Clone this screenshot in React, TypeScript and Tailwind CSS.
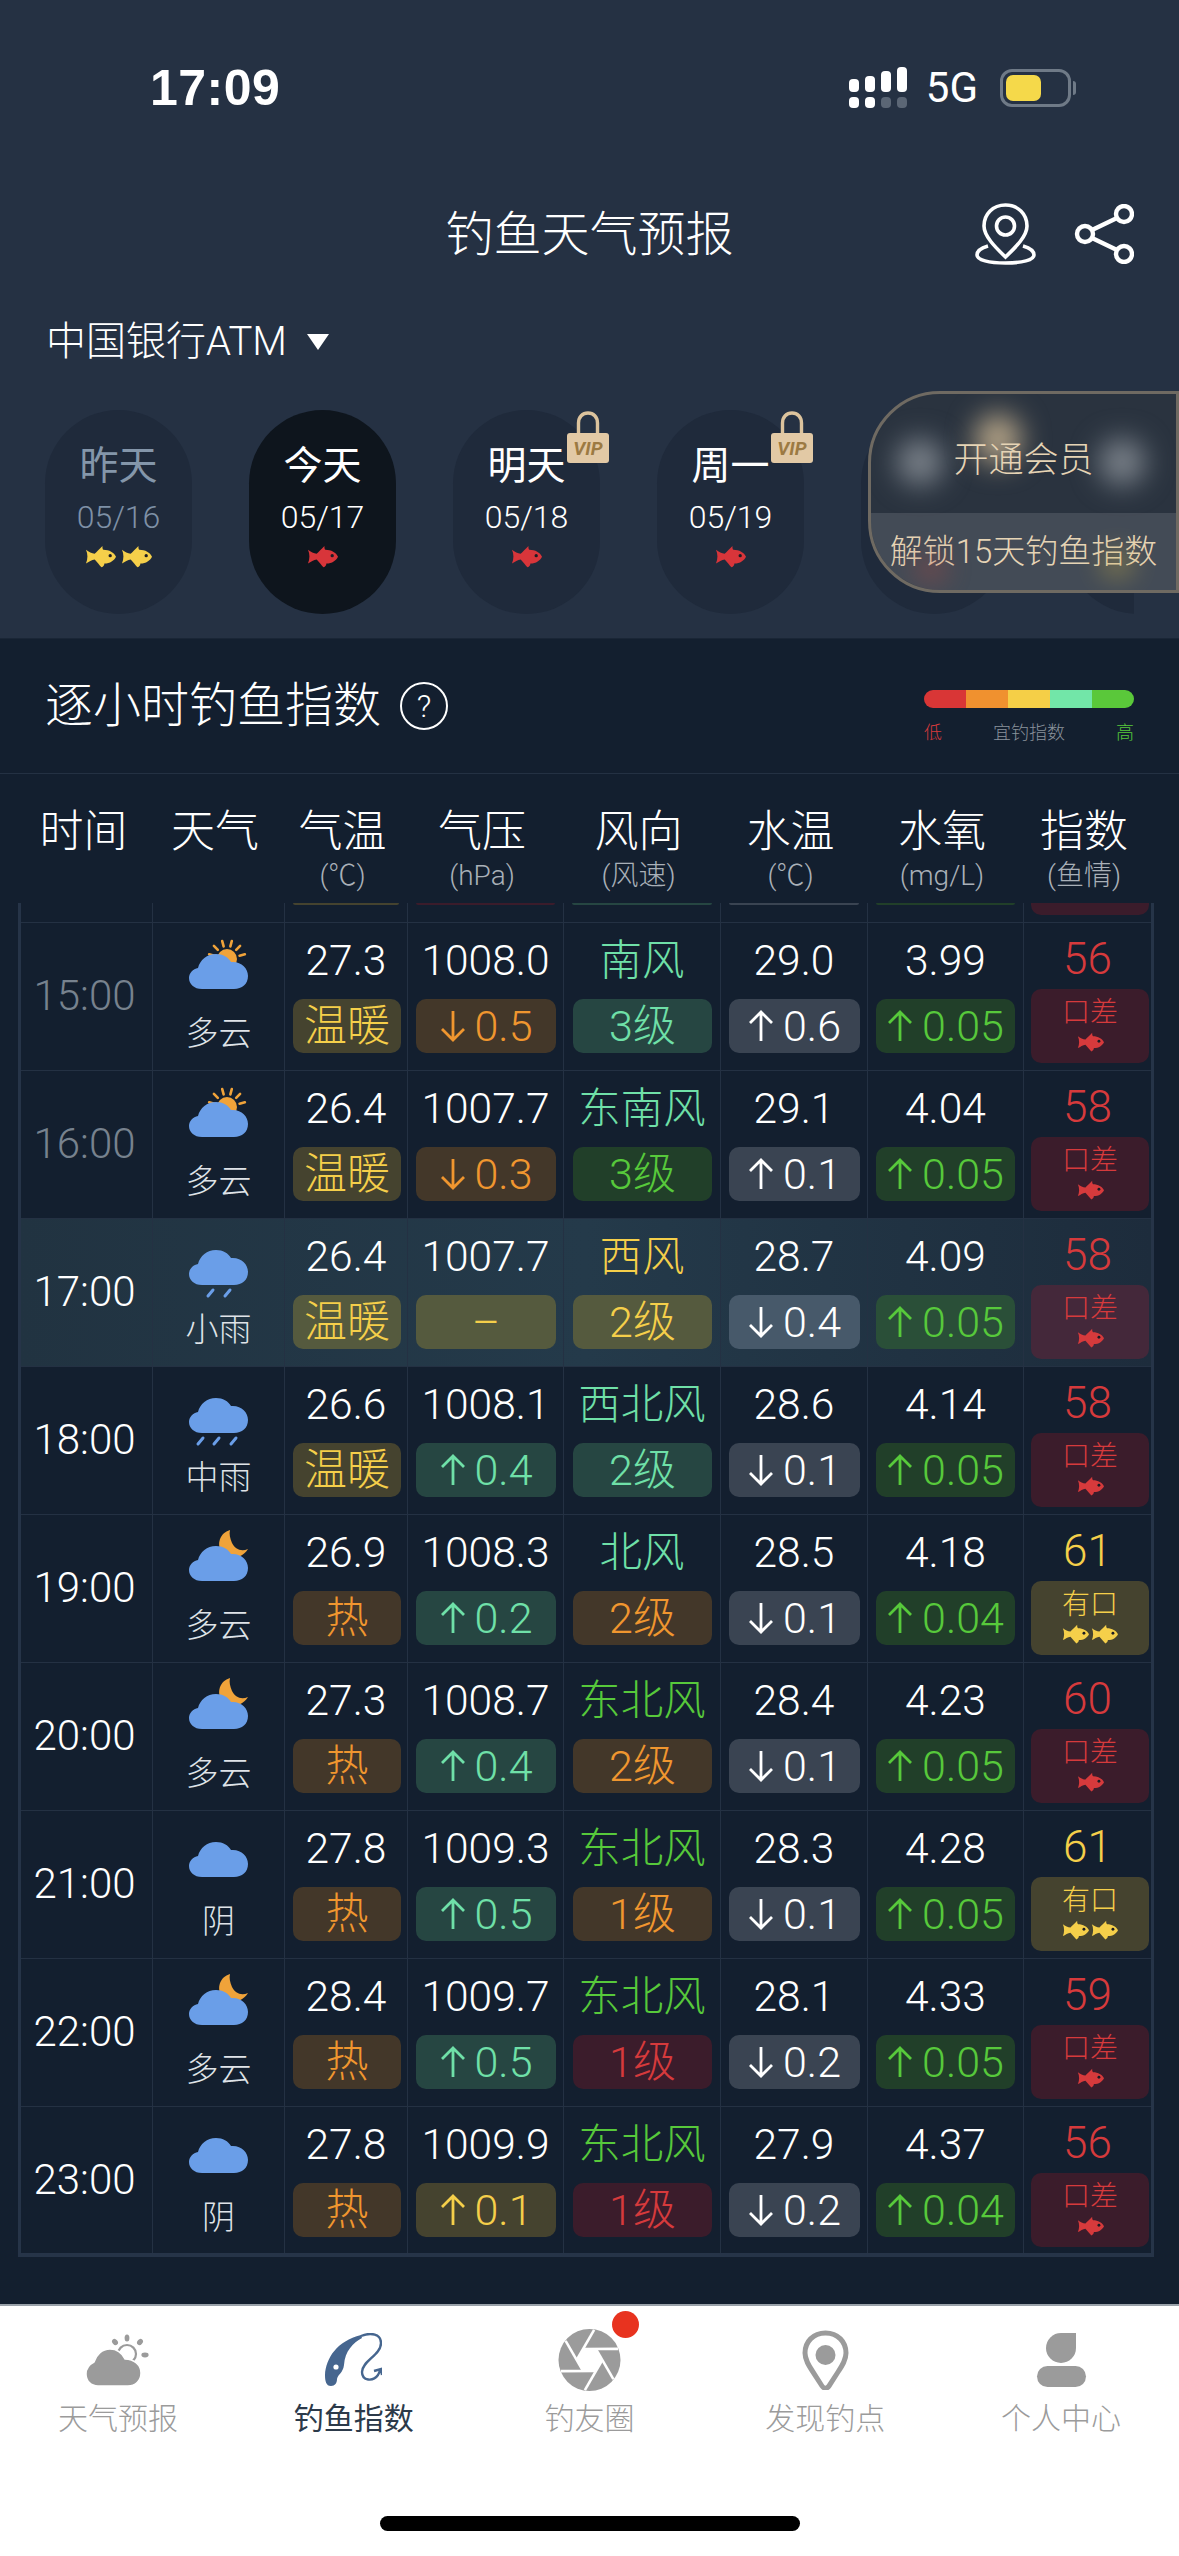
import React from 'react';

type Tone = 'yellow' | 'orange' | 'teal' | 'green' | 'gray' | 'red';
type Sky = 'sun' | 'moon' | 'cloud' | 'lightRain' | 'midRain';

interface Reading {
  text: string;
  tone: Tone;
  arrow?: 'up' | 'down';
}

interface Hour {
  time: string;
  past?: boolean;
  now?: boolean;
  sky: Sky;
  skyText: string;
  temp: string;
  tempTag: Reading;
  pressure: string;
  pressureTag: Reading;
  wind: string;
  windTone: Tone;
  windTag: Reading;
  water: string;
  waterTag: Reading;
  oxygen: string;
  oxygenTag: Reading;
  index: string;
  indexTone: 'red' | 'yellow';
}

const warm: Reading = { text: '温暖', tone: 'yellow' };
const hot: Reading = { text: '热', tone: 'orange' };

const hours: Hour[] = [
  { time: '15:00', past: true, sky: 'sun', skyText: '多云', temp: '27.3', tempTag: warm, pressure: '1008.0', pressureTag: { text: '0.5', tone: 'orange', arrow: 'down' }, wind: '南风', windTone: 'teal', windTag: { text: '3级', tone: 'teal' }, water: '29.0', waterTag: { text: '0.6', tone: 'gray', arrow: 'up' }, oxygen: '3.99', oxygenTag: { text: '0.05', tone: 'green', arrow: 'up' }, index: '56', indexTone: 'red' },
  { time: '16:00', past: true, sky: 'sun', skyText: '多云', temp: '26.4', tempTag: warm, pressure: '1007.7', pressureTag: { text: '0.3', tone: 'orange', arrow: 'down' }, wind: '东南风', windTone: 'teal', windTag: { text: '3级', tone: 'green' }, water: '29.1', waterTag: { text: '0.1', tone: 'gray', arrow: 'up' }, oxygen: '4.04', oxygenTag: { text: '0.05', tone: 'green', arrow: 'up' }, index: '58', indexTone: 'red' },
  { time: '17:00', now: true, sky: 'lightRain', skyText: '小雨', temp: '26.4', tempTag: warm, pressure: '1007.7', pressureTag: { text: '–', tone: 'yellow' }, wind: '西风', windTone: 'yellow', windTag: { text: '2级', tone: 'yellow' }, water: '28.7', waterTag: { text: '0.4', tone: 'gray', arrow: 'down' }, oxygen: '4.09', oxygenTag: { text: '0.05', tone: 'green', arrow: 'up' }, index: '58', indexTone: 'red' },
  { time: '18:00', sky: 'midRain', skyText: '中雨', temp: '26.6', tempTag: warm, pressure: '1008.1', pressureTag: { text: '0.4', tone: 'teal', arrow: 'up' }, wind: '西北风', windTone: 'teal', windTag: { text: '2级', tone: 'teal' }, water: '28.6', waterTag: { text: '0.1', tone: 'gray', arrow: 'down' }, oxygen: '4.14', oxygenTag: { text: '0.05', tone: 'green', arrow: 'up' }, index: '58', indexTone: 'red' },
  { time: '19:00', sky: 'moon', skyText: '多云', temp: '26.9', tempTag: hot, pressure: '1008.3', pressureTag: { text: '0.2', tone: 'teal', arrow: 'up' }, wind: '北风', windTone: 'teal', windTag: { text: '2级', tone: 'orange' }, water: '28.5', waterTag: { text: '0.1', tone: 'gray', arrow: 'down' }, oxygen: '4.18', oxygenTag: { text: '0.04', tone: 'green', arrow: 'up' }, index: '61', indexTone: 'yellow' },
  { time: '20:00', sky: 'moon', skyText: '多云', temp: '27.3', tempTag: hot, pressure: '1008.7', pressureTag: { text: '0.4', tone: 'teal', arrow: 'up' }, wind: '东北风', windTone: 'green', windTag: { text: '2级', tone: 'orange' }, water: '28.4', waterTag: { text: '0.1', tone: 'gray', arrow: 'down' }, oxygen: '4.23', oxygenTag: { text: '0.05', tone: 'green', arrow: 'up' }, index: '60', indexTone: 'red' },
  { time: '21:00', sky: 'cloud', skyText: '阴', temp: '27.8', tempTag: hot, pressure: '1009.3', pressureTag: { text: '0.5', tone: 'teal', arrow: 'up' }, wind: '东北风', windTone: 'green', windTag: { text: '1级', tone: 'orange' }, water: '28.3', waterTag: { text: '0.1', tone: 'gray', arrow: 'down' }, oxygen: '4.28', oxygenTag: { text: '0.05', tone: 'green', arrow: 'up' }, index: '61', indexTone: 'yellow' },
  { time: '22:00', sky: 'moon', skyText: '多云', temp: '28.4', tempTag: hot, pressure: '1009.7', pressureTag: { text: '0.5', tone: 'teal', arrow: 'up' }, wind: '东北风', windTone: 'green', windTag: { text: '1级', tone: 'red' }, water: '28.1', waterTag: { text: '0.2', tone: 'gray', arrow: 'down' }, oxygen: '4.33', oxygenTag: { text: '0.05', tone: 'green', arrow: 'up' }, index: '59', indexTone: 'red' },
  { time: '23:00', sky: 'cloud', skyText: '阴', temp: '27.8', tempTag: hot, pressure: '1009.9', pressureTag: { text: '0.1', tone: 'yellow', arrow: 'up' }, wind: '东北风', windTone: 'green', windTag: { text: '1级', tone: 'red' }, water: '27.9', waterTag: { text: '0.2', tone: 'gray', arrow: 'down' }, oxygen: '4.37', oxygenTag: { text: '0.04', tone: 'green', arrow: 'up' }, index: '56', indexTone: 'red' },
];

const textTone: Record<Tone, string> = {
  yellow: 'text-[#f5cf4a]',
  orange: 'text-[#f0962f]',
  teal: 'text-[#6fe0a8]',
  green: 'text-[#57c93b]',
  gray: 'text-white',
  red: 'text-[#d63a3c]',
};

const chipTone: Record<Tone, string> = {
  yellow: 'bg-[#45432f]',
  orange: 'bg-[#433729]',
  teal: 'bg-[#264642]',
  green: 'bg-[#213f29]',
  gray: 'bg-[#3a4452]',
  red: 'bg-[#3b1c2b]',
};

const chipToneNow: Record<Tone, string> = {
  yellow: 'bg-[#555a3e]',
  orange: 'bg-[#433729]',
  teal: 'bg-[#264642]',
  green: 'bg-[#2a4f38]',
  gray: 'bg-[#47596a]',
  red: 'bg-[#44283a]',
};

const columns = 'grid grid-cols-[131px_132px_123px_156px_157px_147px_156px_128px]';
const CLOUD = 'M13 51C5 51 0 46 0 40C0 35 4 31 9 30C11 22 18 16 27 16C34 16 39 19 42 24C52 23 59 30 59 38C59 46 53 51 45 51Z';
const FISH = 'M1 5C4 7 7 9 10 9C12 7 15 4 18 1C18 3 18 4 19 5C25 5 30 8 32 12C30 16 26 19 20 19C20 21 19 22 17 23C15 21 13 18 10 15C7 15 4 18 1 19C3 15 3 9 1 5Z';

function Fish({ color, size = 31, eye = '#1c1c24' }: { color: string; size?: number; eye?: string }) {
  return (
    <svg width={size} height={(size * 24) / 32} viewBox="0 0 32 24">
      <path d={FISH} fill={color} />
      <circle cx="26" cy="11" r="1.7" fill={eye} />
    </svg>
  );
}

function Arrow({ dir }: { dir: 'up' | 'down' }) {
  return (
    <svg width="26" height="34" viewBox="0 0 26 34" fill="none" stroke="currentColor" strokeWidth="2.8" className="mr-[9px]">
      {dir === 'up' ? <path d="M13 3V32M2 14L13 3L24 14" /> : <path d="M13 31V2M2 20L13 31L24 20" />}
    </svg>
  );
}

function SkyIcon({ sky }: { sky: Sky }) {
  const rays = [-75, -45, -15, 15, 45, 75];
  return (
    <svg width="59" height="63" viewBox="0 0 59 63" className="overflow-visible">
      {sky === 'sun' && (
        <g fill="#f0a33a" stroke="#f0a33a">
          <circle cx="38" cy="21" r="10" stroke="none" />
          {rays.map((r) => (
            <line key={r} x1="38" y1="8" x2="38" y2="2.5" strokeWidth="2.6" strokeLinecap="round" transform={`rotate(${r} 38 21)`} />
          ))}
        </g>
      )}
      {sky === 'moon' && <path d="M41 0C31 3 27 14 33 23C38 30 52 30 59 19C52 22 46 19 43 13C41 8 40 4 41 0Z" fill="#f0a33a" />}
      <path d={CLOUD} fill="#6a9ee8" />
      {sky === 'lightRain' && (
        <g stroke="#6a9ee8" strokeWidth="3" strokeLinecap="round">
          <line x1="24" y1="56" x2="19" y2="62" />
          <line x1="41" y1="56" x2="36" y2="62" />
        </g>
      )}
      {sky === 'midRain' && (
        <g stroke="#6a9ee8" strokeWidth="3" strokeLinecap="round">
          <line x1="14" y1="56" x2="9" y2="62" />
          <line x1="30" y1="56" x2="25" y2="62" />
          <line x1="47" y1="56" x2="42" y2="62" />
        </g>
      )}
    </svg>
  );
}

function Tag({ reading, now, className }: { reading: Reading; now?: boolean; className: string }) {
  const bg = now ? chipToneNow[reading.tone] : chipTone[reading.tone];
  return (
    <div className={`h-[54px] rounded-[10px] flex items-center justify-center text-[43px] font-light ${bg} ${textTone[reading.tone]} ${className}`}>
      {reading.arrow && <Arrow dir={reading.arrow} />}
      <span>{reading.text}</span>
    </div>
  );
}

function DataCell({ value, valueClass, tag, now, tagClass }: { value: string; valueClass?: string; tag: Reading; now?: boolean; tagClass: string }) {
  return (
    <div className="border-l border-[#243143] flex flex-col">
      <div className={`h-[76px] flex items-center justify-center text-[42.5px] font-light leading-none ${valueClass ?? 'text-white'}`}>{value}</div>
      <Tag reading={tag} now={now} className={tagClass} />
    </div>
  );
}

function HourRow({ hour }: { hour: Hour }) {
  const red = hour.indexTone === 'red';
  const indexBg = red ? (hour.now ? 'bg-[#44283a]' : 'bg-[#3b1c2b]') : 'bg-[#45432f]';
  const fishColor = red ? '#d63a3c' : '#f5cf4a';
  return (
    <div
      className={`${columns} h-[148px] border-b border-[#243143] last:h-[146px] last:border-b-0 ${
        hour.now ? 'bg-gradient-to-r from-[#213341] via-[#243a4a] to-[#1d2c3c]' : ''
      }`}
    >
      <div className={`flex items-center justify-center pr-[4px] pb-[2px] text-[42px] font-light ${hour.past ? 'text-[#77828e]' : 'text-white'}`}>{hour.time}</div>
      <div className="border-l border-[#243143] flex flex-col items-center pt-[15px]">
        <SkyIcon sky={hour.sky} />
        <div className="mt-[15px] text-[33px] leading-[36px] font-light text-[#dfe3e8]">{hour.skyText}</div>
      </div>
      <DataCell value={hour.temp} tag={hour.tempTag} now={hour.now} tagClass="ml-[8px] mr-[6px]" />
      <DataCell value={hour.pressure} tag={hour.pressureTag} now={hour.now} tagClass="ml-[8px] mr-[7px]" />
      <DataCell value={hour.wind} valueClass={textTone[hour.windTone]} tag={hour.windTag} now={hour.now} tagClass="ml-[9px] mr-[8px]" />
      <DataCell value={hour.water} tag={hour.waterTag} now={hour.now} tagClass="ml-[8px] mr-[7px]" />
      <DataCell value={hour.oxygen} tag={hour.oxygenTag} now={hour.now} tagClass="ml-[8px] mr-[8px]" />
      <div className="border-l border-[#243143] flex flex-col">
        <div className={`h-[66px] pt-[6px] flex items-center justify-center text-[44px] font-light ${red ? 'text-[#d63a3c]' : 'text-[#f5cf4a]'}`}>{hour.index}</div>
        <div className={`ml-[7px] mr-[2px] h-[74px] rounded-[10px] flex flex-col items-center ${indexBg}`}>
          <div className={`h-[42px] pt-[6px] text-[28px] leading-[36px] font-light ${red ? 'text-[#d63a3c]' : 'text-[#f5cf4a]'}`}>{red ? '口差' : '有口'}</div>
          <div className="flex gap-[2px] mt-[1px]">
            <Fish color={fishColor} size={27} />
            {!red && <Fish color={fishColor} size={27} />}
          </div>
        </div>
      </div>
    </div>
  );
}

function DayPill({ name, date, past, active, vip, fish }: { name: string; date: string; past?: boolean; active?: boolean; vip?: boolean; fish: 'red' | 'yellow' }) {
  return (
    <div className={`relative shrink-0 w-[147px] h-[204px] rounded-[74px] flex flex-col items-center pt-[32px] ${active ? 'bg-[#0e151d]' : 'bg-[#1f2a3b]'}`}>
      <div className={`h-[48px] leading-[48px] text-[39px] ${past ? 'text-[#8496aa]' : 'text-white'}`}>{name}</div>
      <div className={`mt-[7px] h-[40px] leading-[40px] text-[32px] font-light ${past ? 'text-[#7e90a6]' : 'text-white'}`}>{date}</div>
      <div className="mt-[8px] flex gap-[5px]">
        {fish === 'yellow' ? (
          <>
            <Fish color="#f5cf4a" />
            <Fish color="#f5cf4a" />
          </>
        ) : (
          <Fish color="#d8353a" />
        )}
      </div>
      {vip && (
        <div className="absolute left-[114px] top-[1px] w-[42px] flex flex-col items-center">
          <svg width="24" height="22" viewBox="0 0 24 22" fill="none" stroke="#dcc39d" strokeWidth="3.4">
            <path d="M2.5 22V12C2.5 6 6.5 2 12 2C17.5 2 21.5 6 21.5 12V22" />
          </svg>
          <div className="w-[42px] h-[30px] rounded-[3px] bg-[#e2c9a5] flex items-center justify-center text-[#9c7a42] text-[19px] leading-none font-bold italic">VIP</div>
        </div>
      )}
    </div>
  );
}

function TabCloud() {
  return (
    <svg width="64" height="52" viewBox="0 0 64 52">
      <g fill="#9b9b9b">
        <ellipse cx="29" cy="8" rx="2.6" ry="3.4" transform="rotate(-40 29 8)" />
        <ellipse cx="41" cy="4" rx="2.4" ry="3.6" />
        <ellipse cx="54" cy="8" rx="2.6" ry="3.4" transform="rotate(40 54 8)" />
        <ellipse cx="59" cy="21" rx="3.6" ry="2.4" />
      </g>
      <circle cx="41" cy="20" r="9" fill="none" stroke="#9b9b9b" strokeWidth="2.2" />
      <path d="M12 52C5 52 0 47 0 40C0 34 4 30 8 28C10 21 16 15 24 15C31 15 36 19 39 25C48 25 55 31 55 39C55 47 49 52 42 52Z" fill="#9b9b9b" stroke="#fff" strokeWidth="1.5" />
    </svg>
  );
}

function TabRod() {
  return (
    <svg width="57" height="54" viewBox="0 0 57 54" fill="none">
      <path d="M6 53C1 53 0 48 0 42C1 25 12 8 36 2L37 5C28 10 20 18 19 32C18 40 13 41 12 46C12 50 10 53 6 53Z" fill="#46668f" />
      <circle cx="11" cy="34" r="2.6" fill="#fff" />
      <path d="M36 3C46 -1 56 1 56 10C56 22 37 28 37 39C37 48 48 49 53 42L56 36M49 38L56 36L57 42" stroke="#46668f" strokeWidth="2.4" />
    </svg>
  );
}

function TabAperture() {
  return (
    <svg width="63" height="64" viewBox="0 0 64 64">
      <circle cx="32" cy="32" r="31.5" fill="#9b9b9b" />
      {[0, 60, 120, 180, 240, 300].map((r) => (
        <line key={r} x1="45" y1="32" x2="27.3" y2="62.7" stroke="#fff" strokeWidth="2.6" transform={`rotate(${r} 32 32)`} />
      ))}
      <polygon points="45,32 38.5,43.3 25.5,43.3 19,32 25.5,20.7 38.5,20.7" fill="#fff" />
    </svg>
  );
}

function TabPin() {
  return (
    <svg width="47" height="60" viewBox="0 0 47 60">
      <path d="M23.5 3C11 3 3 12 3 23C3 30 7 36 11 42L20 56C22 59 25 59 27 56L36 42C40 36 44 30 44 23C44 12 36 3 23.5 3Z" fill="none" stroke="#9b9b9b" strokeWidth="5" />
      <circle cx="23.5" cy="25" r="10" fill="#9b9b9b" />
    </svg>
  );
}

function TabPerson() {
  return (
    <div className="flex flex-col items-center">
      <div className="w-[30px] h-[30px] rounded-full rounded-tr-none bg-[#9b9b9b]" />
      <div className="mt-[3px] w-[49px] h-[21px] rounded-full bg-[#9b9b9b]" />
    </div>
  );
}

export default function App() {
  return (
    <div className="w-[1179px] h-[2556px] flex flex-col overflow-hidden bg-[#131f2f] [font-family:Roboto,'Noto_Sans_CJK_SC',sans-serif]">
      {/* top part */}
      <div className="h-[638px] bg-[#253143] text-white shrink-0">
        <div className="h-[188px] flex items-start pt-[60px] pl-[150px] pr-[108px] justify-between">
          <div className="text-[50px] leading-[56px] font-bold tracking-[0.5px] [font-family:'Liberation_Sans',sans-serif]">17:09</div>
          <div className="flex items-center mt-[7px]">
            <svg width="58" height="42" viewBox="0 0 58 42" fill="#fff">
              <rect x="0" y="12" width="10" height="13" rx="4" />
              <rect x="16" y="9" width="10" height="16" rx="4" />
              <rect x="32" y="4" width="10" height="21" rx="4" />
              <rect x="48" y="0" width="10" height="25" rx="4" />
              <rect x="0" y="30" width="10" height="11" rx="4" />
              <rect x="16" y="30" width="10" height="11" rx="4" />
              <rect x="32" y="30" width="10" height="11" rx="4" fill="#5b6675" />
              <rect x="48" y="30" width="10" height="11" rx="4" fill="#5b6675" />
            </svg>
            <div className="ml-[19px] text-[42px] leading-none">5G</div>
            <div className="relative ml-[22px] w-[71px] h-[38px] rounded-[12px] border-[3px] border-[#6f7a87]">
              <div className="absolute left-[3px] top-[3px] bottom-[3px] w-[35px] rounded-[7px] bg-[#f5d94a]" />
              <div className="absolute -right-[8px] top-[9px] w-[3px] h-[14px] rounded-r-full bg-[#6f7a87]" />
            </div>
          </div>
        </div>
        <div className="relative h-[94px] flex items-center justify-center text-[48px] font-light">
          钓鱼天气预报
          <div className="absolute right-[45px] top-[15px] flex items-center gap-[38px]">
            <svg width="61" height="62" viewBox="0 0 61 62" fill="none" stroke="#fff" strokeWidth="3.6">
              <path d="M30.5 2C18 2 9 11 9 23C9 33 20 44 30.5 54C41 44 52 33 52 23C52 11 43 2 30.5 2Z" />
              <circle cx="30.5" cy="23" r="9" />
              <path d="M13 43C6 45 2 48 2 52C2 57 14 60 30.5 60C47 60 59 57 59 52C59 48 55 45 48 43" />
            </svg>
            <svg width="60" height="60" viewBox="0 0 60 60" fill="none" stroke="#fff" strokeWidth="4.4">
              <circle cx="50" cy="10" r="8" />
              <circle cx="11" cy="30" r="8" />
              <circle cx="50" cy="50" r="8" />
              <path d="M18 26L43 14M18 34L43 46" />
            </svg>
          </div>
        </div>
        <div className="mt-[36px] pl-[46px] h-[48px] flex items-center text-[40px] font-light">
          中国银行ATM
          <svg width="24" height="18" viewBox="0 0 24 18" className="ml-[19px]" fill="#fff">
            <path d="M1 1H23L12 17Z" />
          </svg>
        </div>
        <div className="relative mt-[44px]">
          <div className="w-[1134px] overflow-hidden flex gap-[57px] pl-[45px]">
            <DayPill name="昨天" date="05/16" past fish="yellow" />
            <DayPill name="今天" date="05/17" active fish="red" />
            <DayPill name="明天" date="05/18" vip fish="red" />
            <DayPill name="周一" date="05/19" vip fish="red" />
            <div className="shrink-0 w-[147px] h-[204px] rounded-[74px] bg-[#1f2a3b]" />
            <div className="shrink-0 w-[147px] h-[204px] rounded-[74px] bg-[#1f2a3b]" />
          </div>
          {/* member card, blurred over the locked days */}
          <div className="absolute left-[868px] -top-[19px] w-[311px] h-[202px] rounded-l-[72px] border-[3px] border-[#6f6a62] bg-[#2a333f] overflow-hidden flex flex-col text-[#e6d4b5]">
            <div className="absolute left-[26px] top-[45px] w-[46px] h-[46px] rounded-full bg-[#7d848c] blur-[14px]" />
            <div className="absolute left-[104px] top-[20px] w-[46px] h-[50px] rounded-full bg-[#b5a487] blur-[14px]" />
            <div className="absolute left-[228px] top-[45px] w-[46px] h-[46px] rounded-full bg-[#7d848c] blur-[14px]" />
            <div className="relative h-[119px] flex items-center justify-center pt-[16px] text-[35px] font-light">开通会员</div>
            <div className="relative flex-1 bg-[#ffffff1f] flex items-center justify-center text-[33px] font-light leading-none">解锁15天钓鱼指数</div>
            <div className="absolute left-[42px] top-[160px] w-[36px] h-[30px] rounded-full bg-[#a04a45] opacity-40 blur-[12px]" />
            <div className="absolute left-[228px] top-[155px] w-[36px] h-[30px] rounded-full bg-[#c0a94a] opacity-40 blur-[12px]" />
          </div>
        </div>
      </div>

      {/* hourly index */}
      <div className="flex-1 min-h-0 border-t border-[#1a2636]">
        <div className="h-[135px] flex justify-between items-start border-b border-[#243143] pl-[45px] pr-[45px]">
          <div className="h-[134px] flex items-center text-white text-[48px] font-light">
            逐小时钓鱼指数
            <div className="ml-[19px] w-[48px] h-[48px] rounded-full border-2 border-white flex items-center justify-center text-[32px] leading-none">?</div>
          </div>
          <div className="mt-[51px] w-[210px]">
            <div className="h-[18px] rounded-full overflow-hidden flex">
              <div className="flex-1 bg-[#d93636]" />
              <div className="flex-1 bg-[#f0912f]" />
              <div className="flex-1 bg-[#f5cf47]" />
              <div className="flex-1 bg-[#72e6a8]" />
              <div className="flex-1 bg-[#5ac83a]" />
            </div>
            <div className="mt-[12px] flex justify-between text-[18px] leading-[26px] font-light">
              <span className="text-[#d63a3c]">低</span>
              <span className="text-[#8a929c]">宜钓指数</span>
              <span className="text-[#57c93b]">高</span>
            </div>
          </div>
        </div>

        <div className="ml-[18px] w-[1136px] h-[129px] pt-[35px] text-white">
          <div className={columns}>
            {[
              ['时间', ''],
              ['天气', ''],
              ['气温', '(℃)'],
              ['气压', '(hPa)'],
              ['风向', '(风速)'],
              ['水温', '(℃)'],
              ['水氧', '(mg/L)'],
              ['指数', '(鱼情)'],
            ].map(([title, unit]) => (
              <div key={title} className="flex flex-col items-center">
                <div className="h-[46px] leading-[46px] text-[44px] font-light">{title}</div>
                <div className="mt-[5px] h-[32px] leading-[32px] text-[28px] font-light text-[#a9b0b8]">{unit}</div>
              </div>
            ))}
          </div>
        </div>

        <div className="ml-[18px] w-[1136px] border-x-[3px] border-b-4 border-[#263448]">
          {/* the row scrolled away above 15:00 */}
          <div className={`${columns} h-[20px] border-b border-[#243143]`}>
            <div />
            <div className="border-l border-[#243143]" />
            <div className="border-l border-[#243143] px-[8px]"><div className="h-[2px] rounded-b-[10px] bg-[#45432f]" /></div>
            <div className="border-l border-[#243143] px-[8px]"><div className="h-[2px] rounded-b-[10px] bg-[#3b1c2b]" /></div>
            <div className="border-l border-[#243143] px-[8px]"><div className="h-[2px] rounded-b-[10px] bg-[#264642]" /></div>
            <div className="border-l border-[#243143] px-[8px]"><div className="h-[2px] rounded-b-[10px] bg-[#3a4452]" /></div>
            <div className="border-l border-[#243143] px-[8px]"><div className="h-[2px] rounded-b-[10px] bg-[#213f29]" /></div>
            <div className="border-l border-[#243143] pl-[7px] pr-[2px]"><div className="h-[12px] rounded-b-[10px] bg-[#3b1c2b]" /></div>
          </div>
          {hours.map((hour) => (
            <HourRow key={hour.time} hour={hour} />
          ))}
        </div>
      </div>

      {/* tab bar */}
      <div className="h-[252px] shrink-0 bg-white border-t-2 border-[#9aa2aa]">
        <div className="relative grid grid-cols-5 pt-[22px]">
          {[
            { label: '天气预报', icon: <TabCloud /> },
            { label: '钓鱼指数', icon: <TabRod />, active: true },
            { label: '钓友圈', icon: <TabAperture />, dot: true },
            { label: '发现钓点', icon: <TabPin /> },
            { label: '个人中心', icon: <TabPerson /> },
          ].map((tab) => (
            <div key={tab.label} className="relative flex flex-col items-center">
              <div className="h-[64px] flex items-center justify-center">{tab.icon}</div>
              <div className={`mt-[9px] text-[30px] leading-[36px] ${tab.active ? 'text-[#2c3a4a]' : 'text-[#9b9b9b] font-light'}`}>{tab.label}</div>
              {tab.dot && <div className="absolute left-[140px] -top-[17px] w-[27px] h-[27px] rounded-full bg-[#e8331f]" />}
            </div>
          ))}
        </div>
        <div className="mx-auto mt-[79px] w-[420px] h-[15px] rounded-full bg-black" />
      </div>
    </div>
  );
}
